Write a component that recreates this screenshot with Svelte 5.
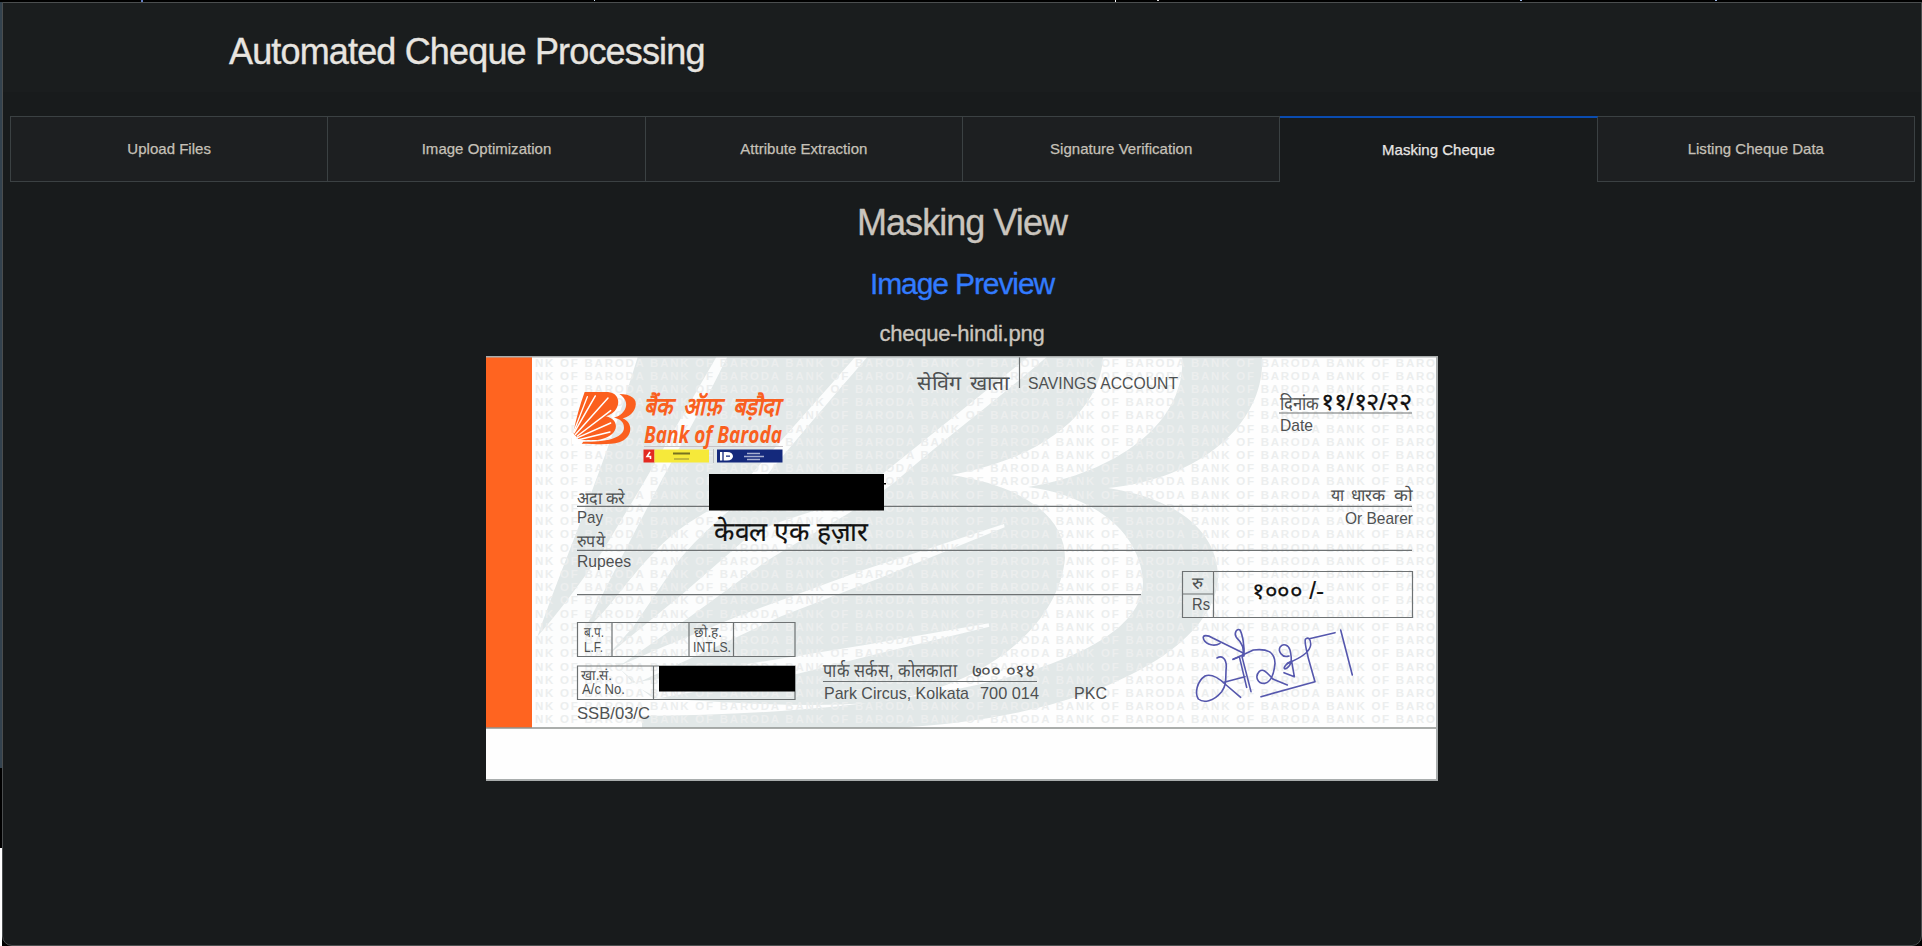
<script>
  const tabs = [
    'Upload Files',
    'Image Optimization',
    'Attribute Extraction',
    'Signature Verification',
    'Masking Cheque',
    'Listing Cheque Data'
  ];
  const active = 4;

  // Security print: the bank's name repeated over the cheque paper
  const rows = Array.from({ length: 28 }, (_, i) => 366.5 + i * 13.22);
  const securityLine = 'NK OF BARODA ' + 'BANK OF BARODA '.repeat(5) + 'BANK OF BARO';

  // Printed and written texts: [text, x, baseline, width, size, kind]
  const texts = [
    ['सेविंग', 916.5, 390, 44, 20, 'print'],
    ['खाता', 970, 390, 39, 20, 'print'],
    ['SAVINGS ACCOUNT', 1028, 389, 150, 17, 'print'],
    ['दिनांक', 1279.5, 410, 40, 19, 'print'],
    ['११/१२/२२', 1321, 410, 91, 24, 'ink'],
    ['Date', 1280, 431, 33, 17, 'print'],
    ['अदा करे', 577, 504, 48, 17, 'print'],
    ['Pay', 577, 523, 26, 17, 'print'],
    ['रुपये', 577, 547, 28, 17, 'print'],
    ['Rupees', 577, 567, 54, 17, 'print'],
    ['केवल एक हज़ार', 714, 541, 154, 27, 'ink'],
    ['या', 1331, 501, 13, 17, 'print'],
    ['धारक', 1351, 501, 34, 17, 'print'],
    ['को', 1394, 501, 18, 17, 'print'],
    ['Or Bearer', 1345, 524, 68, 17, 'print'],
    ['रु', 1192, 589, 11, 17, 'print'],
    ['Rs', 1192, 610, 18, 16, 'print'],
    ['१००० /-', 1252, 599, 72, 23, 'ink'],
    ['ब.प.', 584, 637, 20, 14, 'print'],
    ['L.F.', 584, 652, 19, 14.5, 'print'],
    ['छो.ह.', 694, 637, 28, 14, 'print'],
    ['INTLS.', 693, 652, 38, 14.5, 'print'],
    ['खा.सं.', 581, 680, 31, 14, 'print'],
    ['A/c No.', 582, 694, 43, 14.5, 'print'],
    ['SSB/03/C', 577, 719, 73, 17, 'print'],
    ['पार्क सर्कस, कोलकाता', 823, 677, 134, 19, 'print'],
    ['७०० ०१४', 972, 677, 62, 18, 'print'],
    ['Park Circus, Kolkata', 824, 699, 145, 17, 'print'],
    ['700 014', 980, 699, 59, 17, 'print'],
    ['PKC', 1074, 699, 33, 17, 'print'],
    ['बैंक', 644, 415, 28, 25, 'brand hindi'],
    ['ऑफ़', 683, 415, 38, 25, 'brand hindi'],
    ['बड़ौदा', 733, 415, 46, 25, 'brand hindi'],
    ['Bank of Baroda', 644, 442.5, 138, 22.5, 'brand']
  ];
</script>

<div class="desktop">
  <div class="window">
    <header><h1>Automated Cheque Processing</h1></header>

    <nav>
      {#each tabs as tab, i}
        <button class:active={i === active}>{tab}</button>
      {/each}
    </nav>

    <main>
      <h2>Masking View</h2>
      <h3>Image Preview</h3>
      <p>cheque-hindi.png</p>

      <svg class="cheque" viewBox="486 356 952 425" width="952" height="425">
        <defs>
          <clipPath id="paper"><rect x="532" y="357" width="905" height="371" /></clipPath>
        </defs>
        <rect x="486" y="356" width="952" height="425" fill="#fefefe" />

        <g clip-path="url(#paper)">
          <g fill="#e2e8e8">
            <path d="M638,356 L1103,356 C1102,400 1060,455 951,475 C1020,485 1065,515 1065,558 C1060,620 990,690 870,703 C800,708 720,702 653,698 L633,683 L612,660 L583,633 L537,638 C560,570 600,480 638,356 Z" />
            <path d="M1182,356 L1262,356 C1266,420 1205,478 1108,488 C1175,498 1218,530 1218,578 C1215,650 1080,729 847,729 L642,729 L642,716 C930,714 1141,665 1143,583 C1141,530 1090,495 1028,487 C1120,472 1187,420 1182,356 Z" />
          </g>
          <!-- Light rays that cut the emblem into blades -->
          <g fill="#fcfdfd" transform="translate(530 350) scale(.33333)">
            <path d="M562,16 L594,16 C530,150 460,270 390,400 L260,650 L162,842 L162,900 L16,900 L20,862 Q110,760 220,600 L340,400 Z" />
            <path d="M980,16 L1016,16 C900,150 790,280 690,400 C590,490 500,560 440,640 L310,830 L225,925 L160,925 L160,845 C230,790 290,690 370,610 C480,490 560,490 640,400 Z" />
            <path d="M1500,16 L1556,16 C1400,150 1240,270 1095,396 C960,500 820,560 700,640 L480,800 L280,940 L235,940 L238,912 L460,730 L620,590 C740,480 900,510 1060,370 Z" />
            <path d="M1422,522 L1424,532 L1050,684 L750,800 L610,866 L320,1000 L262,950 L400,890 L620,800 L1000,660 Z" />
            <path d="M1376,820 L1378,830 L1050,910 L800,972 L385,1045 L300,1000 L800,918 L1000,886 Z" />
          </g>
          <g class="watermark">
            {#each rows as y}
              <text x="535" {y} textLength="900">{securityLine}</text>
            {/each}
          </g>
        </g>

        <rect x="486" y="356" width="46" height="372" fill="#ff6420" />

        <!-- Bank emblem -->
        <g transform="translate(480 350) scale(.33333)">
          <g fill="#fb5f1e">
            <path d="M314,126 L384,126 C428,130 424,186 378,199 C424,210 418,262 352,270 L298,270 L280,250 C288,205 300,165 314,126 Z" />
            <path d="M418,132 C452,132 474,146 466,172 C460,192 444,201 428,205 C462,219 458,264 418,277 C390,285 350,282 305,281 L310,275 C390,276 432,260 432,233 C432,214 420,207 402,203 C436,195 456,156 418,132 Z" />
          </g>
          <g stroke="#fff" stroke-width="4.5" stroke-linecap="round">
            <path d="M282,249 L346,138 M287,253 L384,144 M292,258 L392,182 M293,263 L392,219 M296,269 L390,246" />
            <path d="M281,246 L322,140" stroke-width="4" />
          </g>
          <path d="M276,250 L304,282 L276,282 Z" fill="#fff" />
        </g>
        <path d="M644,446.5 H783" stroke="#c8c2c5" />
        <rect x="643.5" y="449.5" width="11" height="13" fill="#e32a21" />
        <path d="M650,452 L647,456.500 H650.500 V459" stroke="#fff" stroke-width="1.6" fill="none" />
        <rect x="654.500" y="449.500" width="54.500" height="13" fill="#f6e93a" />
        <rect x="673" y="452.500" width="17" height="2" fill="#77721f" />
        <rect x="674" y="458" width="15" height="2" fill="#c5ba39" />
        <path d="M713.500,449 V463" stroke="#b9bdc0" />
        <rect x="717" y="449.500" width="65.500" height="13" fill="#14297c" />
        <path d="M720,452 H727 C735,452 735,460.500 727,460.500 H720 Z" fill="#fff" />
        <path d="M723,452 V461 M726,456.200 H730" stroke="#14297c" stroke-width="1.3" />
        <path d="M747,453.500 H760 M744,456.500 H764 M747,459.500 H760" stroke="#a7afd0" stroke-width="1.3" />

        <g class="rules">
          <path d="M1019.5,357 V388 M1279,413 H1412 M577,506.300 H1412 M577,550.300 H1412 M577,594.700 H1141" />
          <path d="M1182.500,571.500 H1412.500 V617.500 H1182.500 Z M1213.500,571.500 V617.500 M1182.500,594 H1213.500" />
          <path d="M577.500,622.500 H795 V656.500 H577.500 Z M612,622.500 V656.500 M689,622.500 V656.500 M733.500,622.500 V656.500" />
          <path d="M577.500,666 H795 V699.500 H577.500 Z M653.500,666 V699.500 M823,681.500 H1037" />
        </g>

        {#each texts as [text, x, y, width, size, kind]}
          <text class={kind} {x} {y} font-size={size} textLength={width} lengthAdjust="spacingAndGlyphs">{text}</text>
        {/each}

        <!-- Masked fields -->
        <rect x="709" y="474" width="175" height="36.500" />
        <rect x="884" y="483" width="2" height="1.500" />
        <rect x="659" y="666" width="136" height="25.500" />

        <!-- Signature -->
        <g class="signature" transform="translate(1150 550) scale(.33333)">
          <path d="M210,280 C195,290 170,286 161,268 C154,252 175,256 188,264 L278,308" />
          <path d="M278,320 C286,290 270,272 259,262 C251,250 260,234 270,240 C278,255 284,290 282,318" />
          <path d="M201,324 C215,315 229,325 229,350 C225,380 233,400 215,425 C190,455 160,460 145,447 C134,430 140,395 165,378 C185,370 210,388 225,402 L272,442" />
          <path d="M222,397 L285,380 M249,328 L268,320 L290,412 M276,320 L303,425" />
          <path d="M250,328 L310,300 C350,295 375,305 375,340 C372,372 365,395 345,400 C323,402 313,380 328,364 C343,352 355,375 370,388 L412,405" />
          <path d="M417,318 C395,325 383,302 391,290 C400,279 415,285 420,300 C427,330 425,345 410,355 C396,362 402,344 425,334 L433,380 L402,368" />
          <path d="M412,340 C450,325 480,305 482,285 C483,265 473,260 466,268 C463,280 470,300 475,325 L495,395 L333,440 M478,266 L555,248 M572,240 L607,375" />
        </g>

        <path d="M486,728 H1438" stroke="#8f9391" stroke-width="1.6" />
        <path d="M486,356.500 H1437 V780 H486" fill="none" stroke="#a9adad" stroke-width="2" />
      </svg>
    </main>
  </div>
</div>

<style>
  :global(body) {
    margin: 0;
    background: #000;
  }
  .desktop {
    box-sizing: border-box;
    width: 1922px;
    height: 946px;
    padding: 2px 0 0 2px;
    overflow: hidden;
    font-family: 'Liberation Sans', Arial, sans-serif;
    background:
      linear-gradient(#647fc4, #647fc4) 141px 0 / 2px 2px no-repeat,
      linear-gradient(#cfe2f6, #cfe2f6) 594px 0 / 1px 1px no-repeat,
      linear-gradient(#fff, #fff) 1115px 0 / 1px 2px no-repeat,
      linear-gradient(#ddd, #ddd) 1157px 0 / 2px 1px no-repeat,
      linear-gradient(#9eb8e8, #9eb8e8) 1520px 0 / 2px 1px no-repeat,
      linear-gradient(#9eb8e8, #9eb8e8) 1715px 0 / 2px 1px no-repeat,
      linear-gradient(#000, #000) 0 0 / 100% 2px no-repeat,
      linear-gradient(#000, #000) 2px 100% / 100% 20px no-repeat,
      linear-gradient(#33424e 768px, #000 768px 848px, #fff 848px);
  }
  .window {
    box-sizing: border-box;
    width: 1920px;
    height: 944px;
    border: 1px solid #4b4e4f;
    border-radius: 0 0 10px 10px;
    background: #181b1c;
  }
  header {
    box-sizing: border-box;
    height: 89px;
    padding: 28px 226px 0;
    background: #1a1d1e;
  }
  h1, h2, h3, p {
    margin: 0;
    font-weight: 400;
    -webkit-text-stroke: 0.35px currentColor;
  }
  h1 {
    font-size: 36px;
    line-height: 42px;
    letter-spacing: -0.84px;
    color: #e8e5e0;
  }
  nav {
    display: flex;
    box-sizing: border-box;
    width: 1905px;
    height: 66px;
    margin: 24px 0 0 7px;
    border-left: 1px solid #3b4143;
  }
  button {
    flex: 1 1 0;
    padding: 0 0 1px;
    border: solid #3b4143;
    border-width: 1px 1px 1px 0;
    border-radius: 0;
    background: #1d1f21;
    color: #c6c1b8;
    font: 15px 'Liberation Sans', Arial, sans-serif;
    letter-spacing: 0.02px;
    -webkit-text-stroke: 0.25px currentColor;
  }
  .active {
    border-top: 2px solid #0a4cb0;
    border-bottom: 0;
    background: #181b1c;
    color: #e8e6e3;
  }
  main {
    display: flex;
    flex-direction: column;
    align-items: center;
    color: #cac5be;
  }
  h2 {
    margin-top: 19px;
    font-size: 36px;
    line-height: 44px;
    letter-spacing: -0.95px;
  }
  h3 {
    margin-top: 21px;
    font-size: 30px;
    line-height: 36px;
    letter-spacing: -1.1px;
    color: #327bff;
  }
  p {
    margin-top: 19px;
    font-size: 22px;
    line-height: 26px;
    letter-spacing: -0.25px;
  }
  .cheque {
    display: block;
    margin-top: 9px;
  }
  .watermark {
    font-size: 11.5px;
    font-weight: 700;
    fill: #eceeee;
  }
  .rules {
    fill: none;
    stroke: #6e7273;
    stroke-width: 1.2;
  }
  .print {
    fill: #4e5152;
  }
  .ink {
    fill: #111;
    stroke: #111;
    stroke-width: 0.2px;
  }
  .brand {
    fill: #f9601f;
    font-family: 'Open Sans', sans-serif;
    font-weight: 700;
    font-style: italic;
  }
  .hindi {
    font-weight: 600;
  }
  .signature {
    fill: none;
    stroke: #5557ad;
    stroke-width: 4.8;
    stroke-linecap: round;
    stroke-linejoin: round;
  }
</style>
